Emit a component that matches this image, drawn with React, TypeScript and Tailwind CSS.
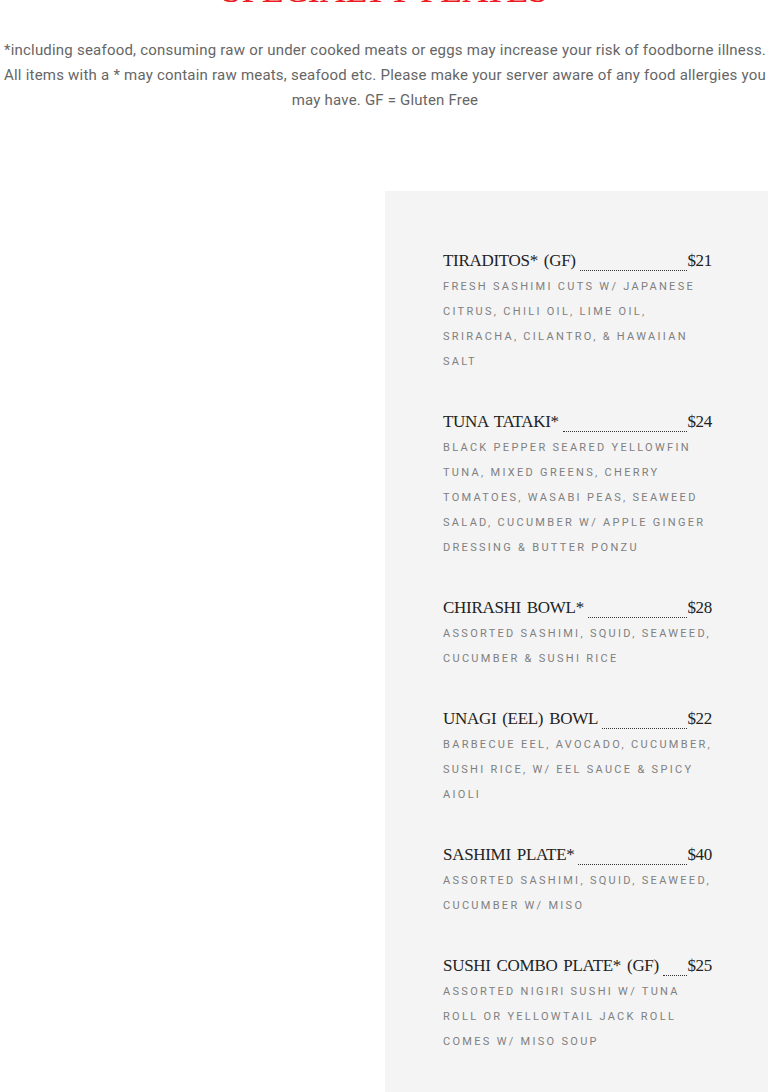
import React from "react";

type Item = { name: string; price: string; desc: string };

const items: Item[] = [
  { name: "TIRADITOS* (GF)", price: "$21", desc: "Fresh sashimi cuts w/ Japanese citrus, chili oil, lime oil, sriracha, cilantro, & Hawaiian salt" },
  { name: "TUNA TATAKI*", price: "$24", desc: "Black pepper seared yellowfin tuna, mixed greens, cherry tomatoes, wasabi peas, seaweed salad, cucumber w/ apple ginger dressing & butter ponzu" },
  { name: "CHIRASHI BOWL*", price: "$28", desc: "Assorted sashimi, squid, seaweed, cucumber & sushi rice" },
  { name: "UNAGI (EEL) BOWL", price: "$22", desc: "Barbecue eel, avocado, cucumber, sushi rice, w/ eel sauce & spicy aioli" },
  { name: "SASHIMI PLATE*", price: "$40", desc: "Assorted sashimi, squid, seaweed, cucumber w/ miso" },
  { name: "SUSHI COMBO PLATE* (GF)", price: "$25", desc: "Assorted nigiri sushi w/ tuna roll or yellowtail jack roll comes w/ miso soup" },
];

function MenuItem({ item }: { item: Item }) {
  return (
    <div className="mb-[34px]">
      <div className="flex items-end text-[17px] leading-[27px] tracking-[-0.3px] [word-spacing:2px] text-[#222] font-['Liberation_Serif',serif]">
        <span className="whitespace-nowrap">{item.name}</span>
        <div className="flex-1 ml-1 mb-[3px] border-b border-dotted border-[#333]" />
        <span>{item.price}</span>
      </div>
      <p className="-mr-[4px] text-[11px] leading-[25px] tracking-[2.3px] uppercase text-[#808080] font-['Roboto',sans-serif]">
        {item.desc}
      </p>
    </div>
  );
}

export default function App() {
  return (
    <div className="w-[770px] min-h-[1092px] bg-white overflow-hidden">
      <h1 className="-mt-[30px] text-center text-[36px] leading-[40px] text-[#ec1c24] font-['Liberation_Serif',serif]">
        SPECIALTY PLATES
      </h1>
      <p className="mt-[28px] px-1 text-[15px] leading-[25px] tracking-[0.2px] text-[#666] font-['Roboto',sans-serif] text-justify [text-align-last:center]">
        *including seafood, consuming raw or under cooked meats or eggs may increase your risk of foodborne illness. All items with a * may contain raw meats, seafood etc. Please make your server aware of any food allergies you may have. GF = Gluten Free
      </p>
      <div className="mt-[78px] flex">
        <div className="w-[385px]" />
        <div className="w-[383px] bg-[#f4f4f4] pt-[56px] pl-[58px] pr-[56px] pb-10">
          {items.map((it) => (
            <MenuItem key={it.name} item={it} />
          ))}
        </div>
      </div>
    </div>
  );
}
